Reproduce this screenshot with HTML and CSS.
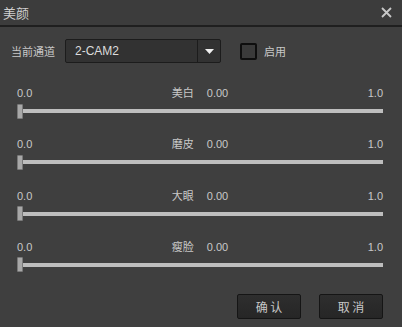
FILE: index.html
```html
<!DOCTYPE html>
<html lang="zh-CN">
<head>
    <meta charset="UTF-8">
    <title>美颜</title>
    <link rel="stylesheet" href="styles.css">
</head>
<body>
<div class="dialog">
    <div class="titlebar">
        <span class="title">美颜</span>
        <svg class="close" width="11" height="11" viewBox="0 0 11 11">
            <path d="M1 1 L10 10 M10 1 L1 10" stroke="#c8c8c8" stroke-width="1.8" fill="none"/>
        </svg>
    </div>

    <div class="channel">
        <span class="label">当前通道</span>
        <div class="combo">
            <span class="combo-text">2-CAM2</span>
            <div class="combo-btn">
                <svg width="9" height="5" viewBox="0 0 9 5"><path d="M0 0 H9 L4.5 5 Z" fill="#f0f0f0"/></svg>
            </div>
        </div>
        <span class="check"></span>
        <span class="label">启用</span>
    </div>

    <div class="slider">
        <div class="slider-labels">
            <span>0.0</span>
            <span class="mid">美白<span class="val">0.00</span></span>
            <span class="max">1.0</span>
        </div>
        <div class="slider-bar"><span class="handle"></span><span class="track"></span></div>
    </div>
    <div class="slider">
        <div class="slider-labels">
            <span>0.0</span>
            <span class="mid">磨皮<span class="val">0.00</span></span>
            <span class="max">1.0</span>
        </div>
        <div class="slider-bar"><span class="handle"></span><span class="track"></span></div>
    </div>
    <div class="slider">
        <div class="slider-labels">
            <span>0.0</span>
            <span class="mid">大眼<span class="val">0.00</span></span>
            <span class="max">1.0</span>
        </div>
        <div class="slider-bar"><span class="handle"></span><span class="track"></span></div>
    </div>
    <div class="slider">
        <div class="slider-labels">
            <span>0.0</span>
            <span class="mid">瘦脸<span class="val">0.00</span></span>
            <span class="max">1.0</span>
        </div>
        <div class="slider-bar"><span class="handle"></span><span class="track"></span></div>
    </div>

    <div class="buttons">
        <button class="btn">确 认</button>
        <button class="btn">取 消</button>
    </div>
</div>
</body>
</html>
```

FILE: styles.css
```css
body {
    margin: 0;
    background-color: #3f3f3f;
    font-family: "Liberation Sans", "Noto Sans CJK SC", sans-serif;
    color: #c8c8c8;
}

.dialog {
    width: 402px;
    height: 327px;
    background-color: #3f3f3f;
}

.titlebar {
    height: 25px;
    display: flex;
    align-items: center;
    justify-content: space-between;
    padding: 0 10px 0 3px;
    border-bottom: 2px solid #1f1f1f;
    background-color: #3c3c3c;
}

.title {
    font-size: 13px;
    color: #d0d0d0;
}

.close {
    margin-top: -1px;
}

.channel {
    display: flex;
    align-items: center;
    height: 24px;
    margin-top: 12px;
    padding-left: 11px;
}

.label {
    font-size: 11px;
}

.combo {
    display: flex;
    width: 156px;
    height: 24px;
    margin-left: 10px;
    box-sizing: border-box;
    border: 1px solid #1c1c1c;
    border-radius: 2px;
    background-color: #323232;
}

.combo-text {
    flex: 1;
    padding-left: 9px;
    line-height: 22px;
    font-size: 12px;
    color: #dcdcdc;
}

.combo-btn {
    width: 22px;
    display: flex;
    align-items: center;
    justify-content: center;
    border-left: 1px solid #1c1c1c;
}

.check {
    width: 17px;
    height: 17px;
    box-sizing: border-box;
    margin: 0 7px 0 19px;
    border: 2px solid #0e0e0e;
    border-radius: 2px;
    background-color: #3a3a3a;
}

.slider {
    padding: 0 19px 0 17px;
    margin-top: 18.33px;
}

.channel + .slider {
    margin-top: 23px;
}

.slider-labels {
    display: grid;
    grid-template-columns: 1fr auto 1fr;
    height: 14px;
    line-height: 14px;
    font-size: 11px;
}

.mid {
    font-size: 11px;
}

.val {
    margin-left: 13px;
}

.max {
    text-align: right;
}

.slider-bar {
    display: flex;
    align-items: center;
    height: 16px;
    margin-top: 3px;
}

.handle {
    width: 6px;
    height: 15px;
    box-sizing: border-box;
    border: 1px solid #7a7a7a;
    border-radius: 1px;
    background-color: #a8a8a8;
}

.track {
    flex: 1;
    height: 4px;
    background-color: #bebebe;
}

.buttons {
    display: flex;
    justify-content: flex-end;
    gap: 18px;
    margin-top: 21px;
    padding-right: 19px;
}

.btn {
    width: 64px;
    height: 25px;
    border: 1px solid #151515;
    border-radius: 2px;
    background: linear-gradient(#2e2e2e, #262626);
    color: #c8c8c8;
    font-family: "Noto Sans CJK SC", sans-serif;
    font-size: 12px;
    padding: 0;
}
```
